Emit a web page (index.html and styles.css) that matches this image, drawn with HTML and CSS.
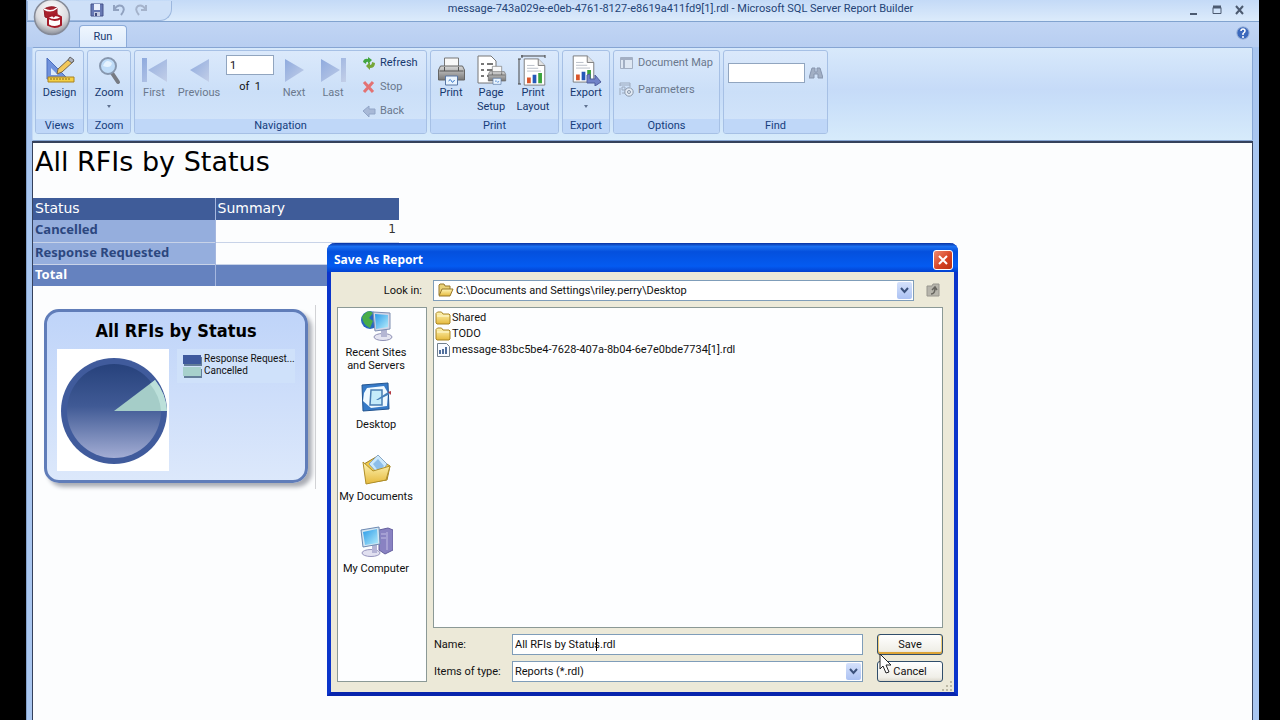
FILE: index.html
```html
<!DOCTYPE html>
<html lang="en">
<head>
<meta charset="utf-8">
<title>Microsoft SQL Server Report Builder</title>
<link rel="stylesheet" href="styles.css">
</head>
<body>
<svg class="defs" width="0" height="0" aria-hidden="true">
  <defs>
    <linearGradient id="nav" x1="0" y1="0" x2="1" y2="1"><stop offset="0" stop-color="#8eaade"/><stop offset="1" stop-color="#c3cfe8"/></linearGradient>
    <linearGradient id="folder" x1="0" y1="0" x2="0" y2="1"><stop offset="0" stop-color="#fff6b8"/><stop offset="1" stop-color="#e5b93c"/></linearGradient>
    <linearGradient id="screen" x1="0" y1="0" x2="1" y2="1"><stop offset="0" stop-color="#2b9be8"/><stop offset="1" stop-color="#b4ecfb"/></linearGradient>
    <linearGradient id="slice" x1="0" y1="0" x2="0" y2="1"><stop offset="0" stop-color="#27427c"/><stop offset=".45" stop-color="#405a95"/><stop offset="1" stop-color="#a3add4"/></linearGradient>
    <linearGradient id="metal" x1="0" y1="0" x2="0" y2="1"><stop offset="0" stop-color="#d8d8d8"/><stop offset="1" stop-color="#777"/></linearGradient>
    <radialGradient id="orb" cx=".5" cy=".3" r=".7"><stop offset="0" stop-color="#fff"/><stop offset=".65" stop-color="#dcdcdf"/><stop offset="1" stop-color="#8b8f99"/></radialGradient>
    <symbol id="i-folder" viewBox="0 0 16 14"><path d="M1 12V2.500L2.500 1h4L8 3h6l1 1v8l-1 1H2z" fill="url(#folder)" stroke="#a98524"/><path d="M2 5h12" stroke="#fffbd8"/></symbol>
    <symbol id="i-page" viewBox="0 0 24 30"><path d="M1 1h15l7 7v21H1z" fill="#fff" stroke="#777"/><path d="M16 1v7h7" fill="#e4e4e4" stroke="#777"/><path d="M4 8h8M4 11h12M4 14h15" stroke="#b7bcc6"/><path d="M4 21h4v6H4z" fill="#d9552b"/><path d="M10 18h4v9h-4z" fill="#2458b8"/><path d="M16 16h4v11h-4z" fill="#3ba33c"/></symbol>
    <symbol id="i-printer" viewBox="0 0 28 30"><path d="M7 2h14v12H7z" fill="#f8f8f8" stroke="#777"/><path d="M3 10h22l2 4v10H1V14z" fill="url(#metal)" stroke="#666"/><path d="M2 15h24M7 11v4M21 11v4" stroke="#555"/><path d="M8 20h12v9H8z" fill="#eaf5ff" stroke="#5877a5"/><path d="M11 25q2-3 3 0t3-1" fill="none" stroke="#3674c6"/></symbol>
  </defs>
</svg>

<main class="window">
  <header class="titlebar">
    <div class="quick">
      <button class="tool" aria-label="Save"><svg width="14" height="14" viewBox="0 0 14 14"><path d="M1 1h12v12H1z" fill="#6778b3" stroke="#47538b"/><path d="M4 1h6v6H4z" fill="#e9effc"/><path d="M4 9h6v4H4z" fill="#c3cae2"/><path d="M5 10h2v3H5z" fill="#414b7d"/></svg></button>
      <button class="tool" aria-label="Undo"><svg width="14" height="14" viewBox="0 0 14 14"><path d="M2 2v5h5M2.500 6Q6 1 10 3q4 3-1 9" fill="none" stroke="#91a2c0" stroke-width="2"/></svg></button>
      <button class="tool" aria-label="Redo"><svg width="14" height="14" viewBox="0 0 14 14"><path d="M12 2v5H7M11.500 6Q8 1 4 3q-4 3 1 9" fill="none" stroke="#a5b3cb" stroke-width="2"/></svg></button>
    </div>
    <h1 class="caption">message-743a029e-e0eb-4761-8127-e8619a411fd9[1].rdl - Microsoft SQL Server Report Builder</h1>
    <div class="winbuttons">
      <button class="tool" aria-label="Minimize"><svg width="10" height="10"><path d="M1 9h7" stroke="#4c5a70" stroke-width="2"/></svg></button>
      <button class="tool" aria-label="Maximize"><svg width="10" height="10"><path d="M1 2.500h8v6H1z" fill="none" stroke="#4c5a70"/><path d="M1 2h8" stroke="#4c5a70" stroke-width="3"/></svg></button>
      <button class="tool" aria-label="Close"><svg width="10" height="10"><path d="M1 1l7 8M8 1L1 9" stroke="#4c5a70" stroke-width="2"/></svg></button>
    </div>
  </header>

  <button class="orb" aria-label="Report Builder menu"><svg width="38" height="38" viewBox="0 0 38 38"><circle cx="19" cy="19" r="17.500" fill="url(#orb)" stroke="#868b98" stroke-width="1.500"/><path d="M11 11q7-4 13-1v9q-6 3-12 0z" fill="#a9212d" stroke="#8c1722"/><path d="M11 11q7 4 13-1" fill="none" stroke="#fff" stroke-width="1.500"/><path d="M15 19q7-4 13 0v8q-6 4-13 0z" fill="#fff" stroke="#a51b29" stroke-width="2"/><path d="M15 20q7 4 13 0M20 19l4-4" fill="none" stroke="#a51b29" stroke-width="2"/></svg></button>

  <nav class="tabs">
    <button class="tab">Run</button>
    <button class="tool" aria-label="Help"><svg width="14" height="14" viewBox="0 0 14 14"><circle cx="7" cy="7" r="6.200" fill="#3b68bc" stroke="#9eb5da"/><path d="M5 5q0-2 2-2t2 2q0 1-2 2.500V9M7 10v2" fill="none" stroke="#fff" stroke-width="1.500"/></svg></button>
  </nav>

  <section class="ribbon">
    <div class="group g-views">
      <div class="items"><button class="big"><svg width="32" height="32" viewBox="0 0 32 32"><path d="M3 4v21h21z" fill="#7092dc" stroke="#4a6cbd"/><path d="M7 14v7h7z" fill="#dbe9fb"/><path d="M4 23h26v5H4z" fill="#f4cf43" stroke="#a98222"/><path d="M7 24v2m3-2v2m3-2v2m3-2v2m3-2v2m3-2v2m3-2v2" stroke="#8b6c1d"/><path d="M13 20l1-5L26 4l4 3-12 11z" fill="#f3c85b" stroke="#776449"/><path d="M24 6l2-3 4 3-2 3z" fill="#aeb3c0" stroke="#686868"/></svg>Design</button></div>
      <div class="label">Views</div>
    </div>
    <div class="group g-zoom">
      <div class="items"><button class="big"><svg width="32" height="32" viewBox="0 0 32 32"><path d="M19 19l6 9" stroke="#777b83" stroke-width="4" stroke-linecap="round"/><circle cx="15" cy="12" r="8" fill="#bfdcf8" stroke="#8797ae" stroke-width="2"/><path d="M10 12q3-8 9-3-1 6-9 3z" fill="#eff8ff" opacity=".8"/></svg>Zoom<i class="drop"></i></button></div>
      <div class="label">Zoom</div>
    </div>
    <div class="group g-nav">
      <div class="items nav">
        <button class="big off"><svg width="32" height="32" viewBox="0 0 32 32"><path d="M4 4h5v24H4zM29 5v23L10 16z" fill="url(#nav)"/></svg>First</button>
        <button class="big off"><svg width="32" height="32" viewBox="0 0 32 32"><path d="M26 5v23L7 16z" fill="url(#nav)"/></svg>Previous</button>
        <div class="pager"><input aria-label="Page" value="1"><span>of&nbsp; 1</span></div>
        <button class="big off"><svg width="32" height="32" viewBox="0 0 32 32"><path d="M7 5v23l19-12z" fill="url(#nav)"/></svg>Next</button>
        <button class="big off"><svg width="32" height="32" viewBox="0 0 32 32"><path d="M4 5v23l19-12zM24 4h5v24h-5z" fill="url(#nav)"/></svg>Last</button>
        <div class="stack">
          <button class="small"><svg width="14" height="14" viewBox="0 0 14 14"><path d="M1 6Q2 2 6 3V1l4 3-4 4V6Q4 5 4 8z" fill="#43a640"/><path d="M13 7q0 5-5 5v2L4 10l4-4v3q2 0 2-3z" fill="#76a638"/></svg>Refresh</button>
          <button class="small off"><svg width="14" height="14"><path d="M2 2l9 10M11 2L2 12" stroke="#e37273" stroke-width="3"/></svg>Stop</button>
          <button class="small off"><svg width="14" height="14"><path d="M1 7l6-5v3h6v5H7v3z" fill="#a8b9d7" stroke="#91a5c7"/></svg>Back</button>
        </div>
      </div>
      <div class="label">Navigation</div>
    </div>
    <div class="group g-print">
      <div class="items print">
        <button class="big"><svg width="32" height="32"><use href="#i-printer" x="2" y="2" width="29" height="30"/></svg>Print</button>
        <button class="big"><svg width="32" height="32" viewBox="0 0 32 32"><path d="M3 2h13l5 5v22H3z" fill="#fff" stroke="#777"/><path d="M6 10h3m3 0h6M6 16h3m3 0h6M6 22h3m3 0h6" stroke="#777" stroke-width="2"/><use href="#i-printer" x="12" y="11" width="20" height="20"/></svg>Page<br>Setup</button>
        <button class="big"><svg width="32" height="32" viewBox="0 0 32 32"><path d="M2 5v25M4 2h24M1 5h3M1 30h3M5 1v3M28 1v3" stroke="#444"/><use href="#i-page" x="6" y="4" width="23" height="28"/></svg>Print<br>Layout</button>
      </div>
      <div class="label">Print</div>
    </div>
    <div class="group g-export">
      <div class="items"><button class="big"><svg width="32" height="32" viewBox="0 0 32 32"><use href="#i-page" x="2" y="1" width="23" height="28"/><path d="M20 20v5h5v-4l6 7-6 4v-3h-8v-8z" fill="#7182c8" stroke="#505e9d"/></svg>Export<i class="drop"></i></button></div>
      <div class="label">Export</div>
    </div>
    <div class="group g-options">
      <div class="items stack">
        <button class="small off"><svg width="15" height="15"><path d="M1.500 2.500h12v11h-12z" fill="#dee7f3" stroke="#a3afc3"/><path d="M2 4h11M5 4v9" stroke="#a3afc3" stroke-width="2"/></svg>Document Map</button>
        <button class="small off"><svg width="15" height="15" viewBox="0 0 15 15"><path d="M1 4V1h10v4M1 3h10M1 6v7M3 5h3v3H3zM3 11h3" fill="none" stroke="#9daabd"/><circle cx="10" cy="10" r="4.200" fill="#e3ebf5" stroke="#8997ab"/><circle cx="10" cy="10" r="1.500" fill="none" stroke="#8997ab"/></svg>Parameters</button>
      </div>
      <div class="label">Options</div>
    </div>
    <div class="group g-find">
      <div class="items find"><input aria-label="Find text"><button class="tool" aria-label="Find"><svg width="14" height="14" viewBox="0 0 14 14"><path d="M3 2h3v4h2V2h3l3 10H9V8H5v4H0z" fill="#a2afc4" stroke="#8795ae"/></svg></button></div>
      <div class="label">Find</div>
    </div>
  </section>

  <section class="report">
    <h2>All RFIs by Status</h2>
    <table class="summary">
      <thead><tr><th>Status</th><th>Summary</th></tr></thead>
      <tbody><tr><th>Cancelled</th><td>1</td></tr><tr><th>Response Requested</th><td></td></tr></tbody>
      <tfoot><tr><th>Total</th><td></td></tr></tfoot>
    </table>
    <div class="chartframe">
      <figure class="chart">
        <figcaption>All RFIs by Status</figcaption>
        <div class="plot">
          <svg width="112" height="122" viewBox="0 0 112 122"><path d="M0 0h112v122H0z" fill="#fff"/><circle cx="57" cy="62" r="53" fill="#405b9c"/><circle cx="57" cy="62" r="47" fill="url(#slice)"/><path d="M57 62L98 31Q109 45 110 62z" fill="#a5cdc8"/><path d="M98 31Q109 45 110 62h-6Q103 47 93 35z" fill="#bce0da"/></svg>
          <ul class="legend">
            <li><i class="key blue"></i>Response Request...</li>
            <li><i class="key teal"></i>Cancelled</li>
          </ul>
        </div>
      </figure>
    </div>
  </section>
</main>

<form class="dialog" role="dialog" aria-labelledby="dlg-title">
  <header class="dlg-head"><h2 id="dlg-title">Save As Report</h2><button type="button" class="close" aria-label="Close"><svg width="12" height="12"><path d="M2 2l8 8M10 2l-8 8" stroke="#fff" stroke-width="2"/></svg></button></header>
  <div class="dlg-body">
    <label class="lookin" for="look">Look in:</label>
    <div class="pathrow">
      <div class="combo path"><svg class="lead" width="16" height="14" viewBox="0 0 16 14"><path d="M1 12V2l1-1h4l1 2h5v3" fill="#ead278" stroke="#99782a"/><path d="M1 13L4 6h11l-3 7z" fill="url(#folder)" stroke="#99782a"/></svg><select id="look"><option>C:\Documents and Settings\riley.perry\Desktop</option></select><span class="arrow"><svg width="9" height="7"><path d="M1 1l3.500 4L8 1" fill="none" stroke="#3c527c" stroke-width="2"/></svg></span></div>
      <button type="button" class="tool" aria-label="Up one level"><svg width="14" height="14"><path d="M1 3h5l1-2h6v12H1z" fill="#b7b5ac" stroke="#98968e"/><path d="M5 11q4 0 4-6M6 7l3-3 2 3" fill="none" stroke="#66645e" stroke-width="1.500"/></svg></button>
    </div>
    <nav class="places">
      <button type="button" class="place"><svg width="34" height="34" viewBox="0 0 34 34"><circle cx="11" cy="12" r="9" fill="#2867bf"/><path d="M3 9q6-9 11-4l-4 5 4 3-3 7q-7-3-8-11z" fill="#48ad48"/><ellipse cx="24" cy="29" rx="9" ry="3.500" fill="#e4e4f1" stroke="#8f91b5"/><path d="M22 21h6v8h-6z" fill="#b4b6d3"/><path d="M14 4l17 1v16l-15 2z" fill="#d3d7e8" stroke="#7e8db1"/><path d="M16 6l13 1v12l-12 2z" fill="url(#screen)"/></svg>Recent Sites<br>and Servers</button>
      <button type="button" class="place"><svg width="34" height="34" viewBox="0 0 34 34"><path d="M3 5l26-2 1 26-26 2z" fill="#367ac7" stroke="#235590"/><path d="M8 8l17-2 4 7-1 13-16 2-8-7 1-8z" fill="#eff9ff"/><path d="M12 10h11v15H11z" fill="#c4ebfa" stroke="#487db3" stroke-width="1.500"/><path d="M17 20l12-8 2 2-12 6z" fill="#4680b9"/><path d="M29 12l3-1v4z" fill="#b43c45"/></svg>Desktop</button>
      <button type="button" class="place"><svg width="34" height="34" viewBox="0 0 34 34"><path d="M5 12l12-7 14 9-3 14-20 3z" fill="#eec849" stroke="#9f8025"/><path d="M10 12l9-9 9 9-7 12z" fill="#cce9fc" stroke="#8ba8c3"/><path d="M14 12l5-5 6 7-5 6z" fill="#8dbeea"/><path d="M4 10l10 9 17-5-4 14-20 4z" fill="url(#folder)" stroke="#b1902a"/></svg>My Documents</button>
      <button type="button" class="place"><svg width="34" height="34" viewBox="0 0 34 34"><path d="M20 6l9-2 5 2v20l-8 4-6-4z" fill="#8982c2" stroke="#645f9d"/><path d="M28 8v18M22 10h5m-5 4h5" stroke="#c1bce4"/><ellipse cx="12" cy="29" rx="9" ry="3.500" fill="#e1e0f0" stroke="#9694bd"/><path d="M13 21h5v8h-5z" fill="#b4b3d5"/><path d="M2 6l18-3 1 17-17 3z" fill="#d4e6f2" stroke="#6d89b2"/><path d="M4 8l14-3 1 14-13 2z" fill="url(#screen)"/></svg>My Computer</button>
    </nav>
    <ul class="files">
      <li><svg width="16" height="14"><use href="#i-folder" width="16" height="14"/></svg>Shared</li>
      <li><svg width="16" height="14"><use href="#i-folder" width="16" height="14"/></svg>TODO</li>
      <li><svg width="16" height="14"><path d="M2.500.5h9l3 3v10h-12z" fill="#f9fbff" stroke="#72808d"/><path d="M5 7v4m3-5v5m3-7v7" stroke="#52709d" stroke-width="2"/></svg>message-83bc5be4-7628-407a-8b04-6e7e0bde7734[1].rdl</li>
    </ul>
    <div class="fields">
      <label for="name">Name:</label>
      <div class="field"><input id="name" value="All RFIs by Status.rdl"><i class="caret"></i></div>
      <button class="push primary">Save</button>
      <label for="type">Items of type:</label>
      <div class="combo"><select id="type"><option>Reports (*.rdl)</option></select><span class="arrow"><svg width="9" height="7"><path d="M1 1l3.500 4L8 1" fill="none" stroke="#3c527c" stroke-width="2"/></svg></span></div>
      <button type="button" class="push">Cancel</button>
    </div>
  </div>
  <svg class="grip" width="11" height="11"><path d="M8 0h2v2H8zM4 4h2v2H4zM8 4h2v2H8zM0 8h2v2H0zM4 8h2v2H4zM8 8h2v2H8z" fill="#bcb8a4"/></svg>
</form>
<svg class="pointer" width="14" height="21" viewBox="0 0 14 21"><path d="M1 1v15l3-3 3 7 3-1-3-7h5z" fill="#fff" stroke="#222"/></svg>
</body>
</html>
```
FILE: styles.css
```css
* { box-sizing: border-box; }
body {
  margin: 0;
  padding: 0 21px 0 26px;
  min-height: 100vh;
  display: flex;
  background: #000;
  font: 11px/15px Roboto, "DejaVu Sans", sans-serif;
  color: #111;
}
button, input, select { font: inherit; color: inherit; }
button { padding: 0; border: 0; background: none; }
h1, h2, ul, figure { margin: 0; padding: 0; }
ul { list-style: none; }
svg { display: block; flex: none; }
.defs, .pointer, .grip, .orb { position: absolute; }

.window { flex: 1; display: flex; flex-direction: column; background: #a9c6f0; border-left: 1px solid #829fca; }
.titlebar { display: flex; align-items: center; height: 22px; padding-right: 14px; background: linear-gradient(#c4daf7, #dcebfb); border-bottom: 1px solid #81a3cf; }
.quick { display: flex; gap: 8px; width: 145px; height: 20px; padding: 2px 0 0 62px; border: 1px solid #9cb7de; border-top: 0; border-radius: 0 0 12px 0; background: #cee0f8; }
.quick .tool, .winbuttons .tool { height: 14px; }
.caption { flex: 1; padding: 0 0 4px; text-align: center; font: inherit; color: #244376; }
.winbuttons { display: flex; gap: 13px; padding-bottom: 2px; }
.orb { left: 33px; top: -2px; }

.tabs { display: flex; justify-content: space-between; align-items: center; height: 25px; padding: 0 9px 0 52px; background: linear-gradient(#c1d5f4, #b8cef1); }
.tab { align-self: flex-end; width: 48px; height: 22px; border: 1px solid #8cabd9; border-bottom: 0; border-radius: 4px 4px 0 0; background: linear-gradient(#eff6fe, #dceafb); color: #17386f; }
.tabs .tool { padding-bottom: 4px; }

.ribbon { display: flex; gap: 3px; height: 94px; margin: 0 6px 0 5px; padding: 2px 3px 6px 2px; border: 1px solid #86a5d3; border-left-color: #c4d9f4; border-radius: 2px; background: linear-gradient(#d8e9fb, #c6dbf8 45%, #c9dff9 60%, #d7ebfb); }
.group { display: flex; flex-direction: column; border: 1px solid #a6c0e5; border-radius: 3px; background: linear-gradient(#dbe9fb, #cbdff8 50%, #d3e5fa); overflow: hidden; }
.g-views { width: 49px; }
.g-zoom { width: 44px; }
.g-nav { width: 293px; }
.g-print { width: 129px; }
.g-export { width: 48px; }
.g-options { width: 107px; }
.g-find { width: 105px; }
.items { flex: 1; display: flex; justify-content: center; }
.label { height: 14px; line-height: 14px; text-align: center; color: #153d7d; background: #bfd7f8; }
.big { display: flex; flex-direction: column; align-items: center; justify-content: flex-start; line-height: 14px; padding-top: 3px; color: #17386f; }
.drop { margin-top: 5px; border: 2px solid transparent; border-top: 3px solid #5f7290; }
.off { color: #6a788d; }
.nav { display: grid; grid-template-columns: 38px 52px 50px 38px 40px 66px; justify-content: start; }
.pager { display: flex; flex-direction: column; gap: 4px; align-items: center; padding-top: 4px; }
.pager input, .find input { height: 20px; border: 1px solid #91a5bf; background: #fff; padding: 0 3px; }
.pager input { width: 48px; }
.stack { display: flex; flex-direction: column; justify-content: flex-start; gap: 9px; padding-top: 4px; }
.small { display: flex; align-items: center; gap: 4px; height: 15px; color: #17386f; }
.nav .stack { padding-left: 9px; }
.small.off { color: #6a788d; }
.print { display: grid; grid-template-columns: 40px 40px 44px; justify-content: start; }
.items.stack { gap: 12px; padding-left: 5px; }
.find { align-items: flex-start; gap: 4px; padding-top: 12px; }
.find input { width: 77px; }
.find .tool { padding-top: 3px; }

.report { flex: 1; margin: 0 6px 0 5px; border: 1px solid #35415c; border-bottom: 0; border-top-width: 2px; background: #fcfdfe; }
.report h2 { height: 55px; padding: 2px 0 0 2px; font: 27px/34px "DejaVu Sans", sans-serif; color: #000; }
.summary { width: 366px; border-collapse: collapse; table-layout: fixed; font: 13px/19px "Noto Sans", sans-serif; }
.summary th, .summary td { height: 22px; padding: 0 3px 2px 2px; text-align: left; }
.summary thead th { width: 182px; background: #3f5c99; color: #fff; font: 14px/20px "DejaVu Sans", sans-serif; }
.summary thead th + th { width: auto; }
.summary th + th, .summary td { border-left: 1px solid #a5b7df; }
.summary tbody th { background: #95aedd; color: #2c477f; }
.summary tbody tr { border-bottom: 1px solid #c8d3e8; }
.summary tbody td { text-align: right; color: #333; font-family: "DejaVu Sans", sans-serif; font-size: 12px; }
.summary tfoot th, .summary tfoot td { background: #6582bf; color: #fff; }
.chartframe { width: 283px; margin-top: 19px; padding: 4px 7px 6px 11px; border-right: 1px solid #d1d2d5; }
.chart { height: 174px; padding: 8px 10px; border: 3px solid #607db9; border-radius: 15px; background: linear-gradient(#bfd4f9, #dce8fb); box-shadow: 4px 4px 4px #aaadb5; }
.chart figcaption { text-align: center; font-family: "DejaVu Sans Condensed", "DejaVu Sans", sans-serif; font-size: 18px; line-height: 22px; font-weight: bold; color: #000; }
.plot { display: flex; gap: 8px; margin-top: 7px; }
.legend { flex: 1; align-self: flex-start; padding: 4px 0 6px 6px; background: #cfe1fa; font-size: 10px; line-height: 12px; white-space: nowrap; }
.legend li { display: flex; align-items: center; gap: 3px; }
.key { width: 18px; height: 9px; box-shadow: 1px 2px 0 #637d99; }
.blue { background: #3e599d; }
.teal { background: #a7d0cc; }

.dialog { position: absolute; left: 327px; top: 243px; width: 631px; border: 4px solid #0b35cb; border-top: 0; border-bottom-color: #0825ad; border-radius: 8px 8px 0 0; background: #ece9d8; }
.dlg-head { display: flex; align-items: center; justify-content: space-between; height: 29px; margin: 0 -4px; padding: 4px 5px 0 7px; border-radius: 8px 8px 0 0; background: linear-gradient(#0831a0, #1b70f1 12%, #0450dd 30%, #045bf1 80%, #0341cf); }
.dlg-head h2 { font: bold 12px/16px "Noto Sans", sans-serif; color: #fff; }
.close { display: grid; place-items: center; width: 20px; height: 20px; border: 1px solid #fff; border-radius: 3px; background: linear-gradient(135deg, #f08a6e, #d44021 60%, #b83214); }
.dlg-body { display: grid; grid-template-columns: 90px 1fr; grid-template-rows: 22px 327px auto; column-gap: 6px; padding: 7px 11px 10px 6px; }
.dlg-body .lookin { text-align: right; padding: 4px 5px 0 0; }
.pathrow { display: flex; align-items: center; gap: 12px; padding-right: 3px; }
.combo { position: relative; height: 21px; border: 1px solid #7f9db9; background: #fff; }
.combo.path { flex: 1; }
.combo select { width: 100%; height: 19px; padding: 0 20px 0 2px; border: 0; background: none; appearance: none; line-height: 17px; }
.combo.path select { padding-left: 22px; }
.lead { position: absolute; left: 4px; top: 2px; }
.arrow { position: absolute; right: 1px; top: 1px; display: grid; place-items: center; width: 15px; height: 17px; border-radius: 2px; background: linear-gradient(#d5e1fb, #acc2f3); pointer-events: none; }
.places, .files { margin-top: 6px; background: #fdfeff; border: 1px solid #8b9996; }
.places { grid-row: 2 / 4; display: flex; flex-direction: column; gap: 21px; padding-right: 12px; }
.place { display: flex; flex-direction: column; align-items: center; gap: 4px; line-height: 13px; white-space: nowrap; }
.place:nth-child(2) { margin-top: -13px; }
.files { padding: 2px 1px; line-height: 16px; }
.files li { display: flex; align-items: center; gap: 1px; }
.fields { display: grid; grid-template-columns: 78px 1fr 66px; grid-template-rows: 21px 21px; gap: 6px 0; margin-top: 6px; padding-left: 1px; align-items: center; }
.field { position: relative; }
.field input { width: 100%; height: 21px; padding: 0 2px; border: 1px solid #7f9db9; background: #fff; display: block; }
.caret { position: absolute; left: 84px; top: 4px; width: 1px; height: 13px; background: #000; }
.field, .fields .combo { margin-right: 14px; }
.push { height: 21px; border: 1px solid #304e6b; border-radius: 3px; background: linear-gradient(#fff, #f0efe8 80%, #dedacd); }
.primary { box-shadow: inset 0 -2px #dca437, inset 1px 0 #efcc77, inset -1px 0 #efcc77; }
.grip { right: 1px; bottom: 0; }
.pointer { left: 879px; top: 653px; }
```
